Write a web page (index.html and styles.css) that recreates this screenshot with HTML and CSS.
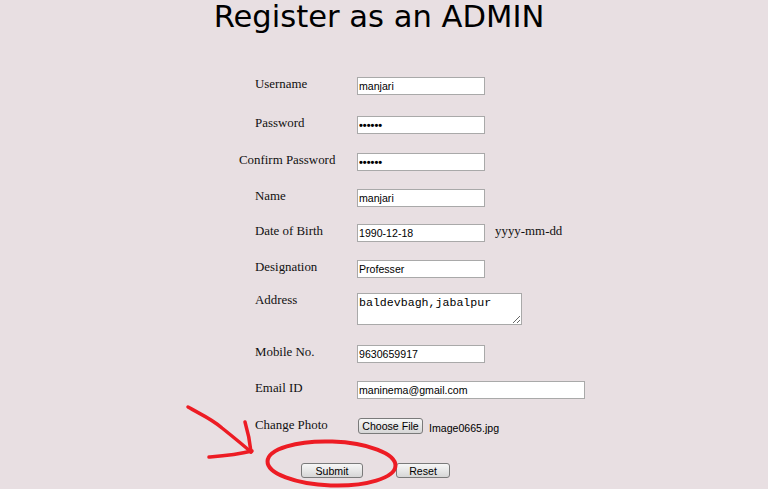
FILE: index.html
```html
<!DOCTYPE html>
<html>
<head>
<meta charset="utf-8">
<title>Register as an ADMIN</title>
<link rel="stylesheet" href="styles.css">
</head>
<body>
<div class="page">
  <h1 class="title">Register as an ADMIN</h1>
  <form class="reg">
    <div class="row r39"><span class="lbl">Username</span><input class="field" type="text" value="manjari"></div>
    <div class="row r37"><span class="lbl">Password</span><input class="field pw" type="password" value="123456"></div>
    <div class="row r36"><span class="lbl wide">Confirm Password</span><input class="field pw" type="password" value="123456"></div>
    <div class="row r35"><span class="lbl">Name</span><input class="field" type="text" value="manjari"></div>
    <div class="row r36"><span class="lbl">Date of Birth</span><input class="field" type="text" value="1990-12-18"><span class="hint">yyyy-mm-dd</span></div>
    <div class="row r33"><span class="lbl">Designation</span><input class="field" type="text" value="Professer"></div>
    <div class="row r52"><span class="lbl">Address</span><textarea class="area">baldevbagh,jabalpur</textarea></div>
    <div class="row r36"><span class="lbl">Mobile No.</span><input class="field" type="text" value="9630659917"></div>
    <div class="row r37"><span class="lbl">Email ID</span><input class="field email" type="text" value="maninema@gmail.com"></div>
    <div class="row r45"><span class="lbl">Change Photo</span><span class="file"><button type="button" class="btn choose">Choose File</button><span class="fname">Image0665.jpg</span></span></div>
    <div class="actions"><button type="button" class="btn submit">Submit</button><button type="button" class="btn reset">Reset</button></div>
  </form>
  <svg class="marks" width="768" height="489" viewBox="0 0 768 489">
    <path d="M188 407 C 200 414, 212 419, 222 428 C 232 436, 242 444, 251 452" />
    <path d="M245 422 C 248 432, 250 442, 251 452" />
    <path d="M209 457 C 222 456, 236 455, 252 451" />
    <ellipse cx="331.5" cy="463.5" rx="64" ry="22" transform="rotate(2 331.5 463.5)" />
  </svg>
</div>
</body>
</html>
```
FILE: styles.css
```css
html, body {
  margin: 0;
  padding: 0;
}
body {
  background: #e8dfe2;
  width: 768px;
  height: 489px;
  overflow: hidden;
}
.page {
  position: relative;
  width: 768px;
  height: 489px;
}
.title {
  margin: 0;
  padding: 2px 10px 0 0;
  height: 30px;
  font-family: "DejaVu Sans", Verdana, sans-serif;
  font-weight: normal;
  font-size: 30.6px;
  line-height: 30px;
  text-align: center;
  color: #000;
}
.reg {
  margin: 45px 0 0 239px;
  display: flex;
  flex-direction: column;
}
.row {
  display: flex;
  align-items: flex-start;
}
.r33 { height: 33px; }
.r35 { height: 35px; }
.r36 { height: 36px; }
.r37 { height: 37px; }
.r39 { height: 39px; }
.r45 { height: 45px; }
.r52 { height: 52px; }
.lbl {
  width: 102px;
  padding-left: 16px;
  font-family: "Liberation Serif", "Times New Roman", serif;
  font-size: 12.9px;
  line-height: 15px;
  color: #111;
  flex: none;
}
.lbl.wide {
  width: 118px;
  padding-left: 0;
}
.field {
  box-sizing: border-box;
  width: 128px;
  height: 18px;
  margin: 0;
  padding: 0 1px;
  border: 1px solid #a9a9a9;
  background: #fff;
  font-family: "Liberation Sans", Arial, sans-serif;
  font-size: 10.6px;
  color: #000;
  outline: none;
}
.field.pw {
  font-size: 11px;
  font-weight: bold;
}
.field.email {
  width: 228px;
}
.hint {
  margin-left: 10px;
  font-family: "Liberation Serif", "Times New Roman", serif;
  font-size: 12.9px;
  line-height: 15px;
  color: #111;
}
.area {
  box-sizing: border-box;
  width: 165px;
  height: 32px;
  margin: 0;
  padding: 2px 1px;
  border: 1px solid #a9a9a9;
  background: #fff;
  font-family: "Liberation Mono", "Courier New", monospace;
  font-size: 11.6px;
  line-height: 13px;
  color: #000;
  outline: none;
}
.file {
  display: flex;
  align-items: center;
}
.btn {
  box-sizing: border-box;
  height: 16px;
  margin: 0;
  padding: 0;
  border: 1px solid #7a7a7a;
  border-radius: 3px;
  background: linear-gradient(#f7f7f7, #e4e4e4 60%, #d6d6d6);
  font-family: "Liberation Sans", Arial, sans-serif;
  font-size: 10.6px;
  line-height: 14px;
  color: #000;
}
.choose {
  width: 65px;
  margin-left: 1px;
}
.fname {
  margin-left: 6px;
  font-family: "Liberation Sans", Arial, sans-serif;
  font-size: 10.6px;
  color: #000;
  padding-top: 3px;
}
.actions {
  display: flex;
  gap: 33px;
  padding-left: 62px;
}
.submit { width: 62px; height: 15px; }
.reset { width: 54px; height: 15px; }
.marks {
  position: absolute;
  left: 0;
  top: 0;
  pointer-events: none;
  fill: none;
  stroke: #ed1c24;
  stroke-width: 3.5;
  stroke-linecap: round;
}
.marks ellipse {
  stroke-width: 4;
}
```
